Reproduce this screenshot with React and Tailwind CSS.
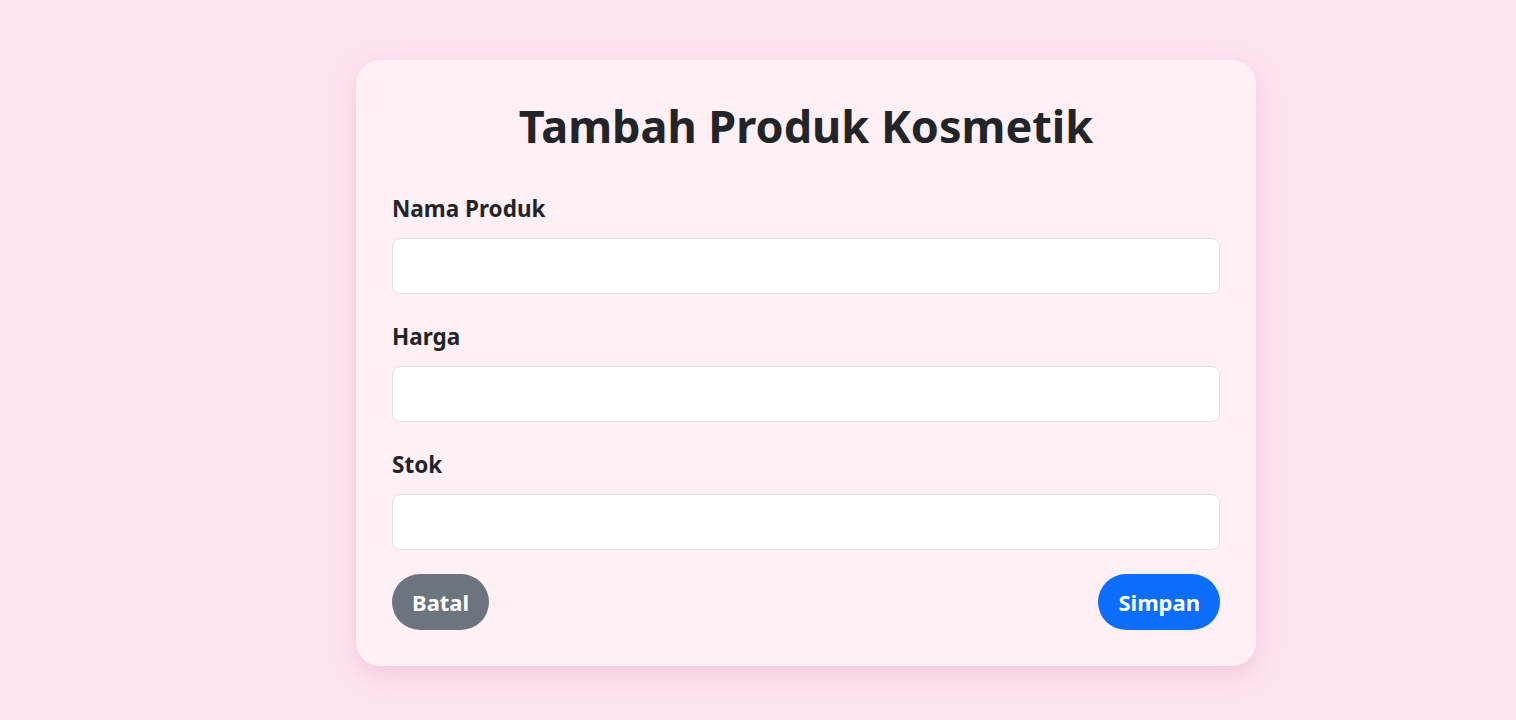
import React from "react";

const Field = ({ label, type = "text", last = false }) => {
  return (
    <div className={last ? "mb-6" : "mb-[26px]"}>
      <label className="block mb-[13px] text-[22.5px] leading-[33px] font-bold text-[#212529]">
        {label}
      </label>
      <input
        type={type}
        className="block w-full h-14 px-4 bg-white border border-[#dee2e6] rounded-lg outline-none text-[20px]"
      />
    </div>
  );
};

export default function App() {
  return (
    <div
      className="min-h-screen w-full bg-[#fee4f0] pt-[60px] pl-[356px]"
      style={{ fontFamily: '"Noto Sans", "Open Sans", sans-serif' }}
    >
      <div className="w-[900px] bg-[#fff0f5] rounded-[24px] p-9 shadow-[0_8px_24px_rgba(200,120,160,0.25)]">
        <h1 className="text-center text-[45px] leading-[59px] font-bold text-[#212529] mb-[37px]">
          Tambah Produk Kosmetik
        </h1>

        <form>
          <Field label="Nama Produk" />
          <Field label="Harga" type="number" />
          <Field label="Stok" type="number" last />

          <div className="flex justify-between items-center">
            <button
              type="button"
              className="h-14 px-5 rounded-full bg-[#6c757d] text-white text-[22px] font-bold"
            >
              Batal
            </button>
            <button
              type="submit"
              className="h-14 px-5 rounded-full bg-[#0d6efd] text-white text-[22px] font-bold"
            >
              Simpan
            </button>
          </div>
        </form>
      </div>
    </div>
  );
}
